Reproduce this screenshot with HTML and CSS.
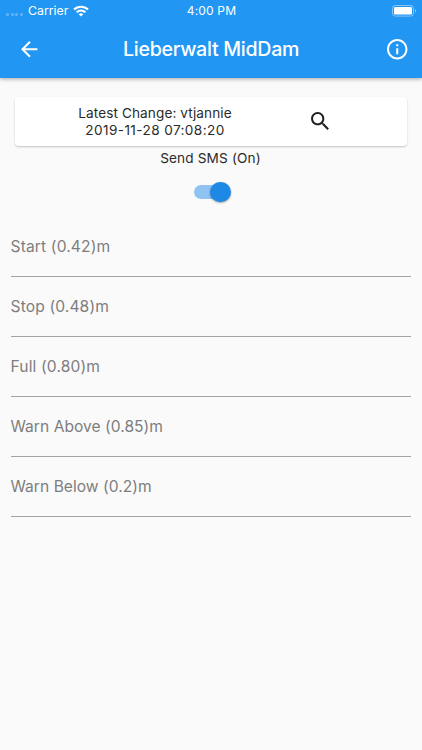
FILE: index.html
```html
<!DOCTYPE html>
<html lang="en">
<head>
<meta charset="utf-8">
<title>Lieberwalt MidDam</title>
<link rel="stylesheet" href="styles.css">
</head>
<body>
<header class="top">
  <div class="status">
    <div class="carrier">
      <span class="dots"><i></i><i></i><i></i><i></i></span>
      <span class="carrier-name">Carrier</span>
      <svg class="wifi" width="16" height="12" viewBox="0 0 16 12" fill="none" stroke="#fff" stroke-width="2.1">
        <path d="M1 4.6a9.9 9.9 0 0 1 14 0"/>
        <path d="M3.6 7.3a6.2 6.2 0 0 1 8.8 0"/>
        <path d="M8 11.6 5.7 9.3a3.3 3.3 0 0 1 4.6 0z" fill="#fff" stroke="none"/>
      </svg>
    </div>
    <time class="clock">4:00 PM</time>
    <svg class="battery" width="26" height="12" viewBox="0 0 26 12">
      <rect x=".5" y=".5" width="21" height="10.6" rx="2.8" fill="none" stroke="#fff" stroke-opacity=".45"/>
      <rect x="2" y="2" width="18" height="7.6" rx="1.4" fill="#fff"/>
      <path d="M23 4v3.8c1.6-.5 1.6-3.3 0-3.8z" fill="#fff" fill-opacity=".45"/>
    </svg>
  </div>
  <div class="bar">
    <svg class="icon" viewBox="0 0 24 24" fill="#fff"><path d="M20 11H7.830l5.590-5.590L12 4l-8 8 8 8 1.410-1.410L7.830 13H20v-2z"/></svg>
    <h1 class="title">Lieberwalt MidDam</h1>
    <svg class="icon" viewBox="0 0 24 24" fill="#fff"><path d="M11 17h2v-6h-2v6zm1-15C6.480 2 2 6.480 2 12s4.480 10 10 10 10-4.480 10-10S17.520 2 12 2zm0 18c-4.410 0-8-3.590-8-8s3.590-8 8-8 8 3.590 8 8-3.590 8-8 8zM11 9h2V7h-2v2z"/></svg>
  </div>
</header>
<main>
  <section class="card">
    <div class="change"><span class="who">Latest Change: vtjannie</span><span class="when">2019-11-28 07:08:20</span></div>
    <svg class="icon search" viewBox="0 0 24 24" fill="#202020"><path d="M15.500 14h-.790l-.280-.270C15.410 12.590 16 11.110 16 9.500 16 5.910 13.090 3 9.500 3S3 5.910 3 9.500 5.910 16 9.500 16c1.610 0 3.090-.590 4.230-1.570l.270.280v.790l5 4.990L20.490 19l-4.990-5zm-6 0C7.010 14 5 11.990 5 9.500S7.010 5 9.500 5 14 7.010 14 9.500 11.990 14 9.500 14z"/></svg>
  </section>
  <div class="sms">Send SMS (On)</div>
  <div class="switch"><span class="thumb"></span></div>
  <form class="fields">
    <div class="field">Start (0.42)m</div>
    <div class="field">Stop (0.48)m</div>
    <div class="field">Full (0.80)m</div>
    <div class="field warn">Warn Above (0.85)m</div>
    <div class="field warn">Warn Below (0.2)m</div>
  </form>
</main>
</body>
</html>
```
FILE: styles.css
```css
* { box-sizing: border-box; }
body {
  margin: 0;
  min-height: 750px;
  background: #fafafa;
  color: #2b2b2b;
  font-family: Inter, "Liberation Sans", sans-serif;
}
svg { display: block; flex: none; }
.top {
  height: 78px;
  background: #2196f3;
  color: #fff;
  box-shadow: 0 1px 4px rgba(0, 0, 0, .34);
}
.status {
  display: grid;
  grid-template-columns: 1fr auto 1fr;
  align-items: center;
  height: 20px;
  padding: 0 4px 0 6px;
  font-size: 12px;
  line-height: 20px;
}
.carrier { display: flex; align-items: center; }
.dots { display: flex; gap: 1.7px; width: 22px; padding-top: 8px; }
.dots i { width: 3px; height: 3px; border-radius: 50%; background: rgba(255, 255, 255, .3); }
.carrier-name { font-size: 12.300px; }
.wifi { margin-left: 4.500px; }
.clock { margin-right: 1px; padding-top: 1px; letter-spacing: .15px; }
.battery { justify-self: end; }
.bar {
  display: flex;
  align-items: center;
  justify-content: space-between;
  height: 58px;
  padding: 0 12.400px 0 16.500px;
}
.icon { width: 24.500px; height: 24.500px; }
.title {
  margin: 0;
  padding-right: 4px;
  font-size: 19.600px;
  line-height: 24px;
  font-weight: 500;
  letter-spacing: -.28px;
}
.card {
  display: flex;
  align-items: center;
  height: 49px;
  margin: 19px 15px 0;
  border-radius: 4px;
  background: #fff;
  box-shadow: 0 1px 2px rgba(0, 0, 0, .22);
}
.change {
  display: flex;
  flex-direction: column;
  align-items: center;
  width: 280px;
  font-size: 13.600px;
  line-height: 17px;
}
.who { letter-spacing: .1px; }
.when { letter-spacing: .4px; }
.search { margin-left: 13px; }
.sms {
  margin-top: 4px;
  padding-right: 1px;
  text-align: center;
  font-size: 13.600px;
  line-height: 17px;
  letter-spacing: .15px;
}
.switch {
  display: flex;
  align-items: center;
  justify-content: flex-end;
  width: 35px;
  height: 14px;
  margin: 18px auto 0;
  border-radius: 7px;
  background: #8ec3f2;
}
.thumb {
  flex: none;
  width: 20.500px;
  height: 20.500px;
  margin-right: -2px;
  border-radius: 50%;
  background: #1e88e5;
  box-shadow: 0 1px 2px rgba(0, 0, 0, .35);
}
.fields { margin: 18px 11px 0 10.500px; }
.field {
  display: flex;
  align-items: center;
  height: 60px;
  border-bottom: 1px solid #a3a3a3;
  color: #7e7e7e;
  font-size: 15.600px;
  line-height: 20px;
  letter-spacing: .13px;
}
.warn { letter-spacing: .02px; }
```
